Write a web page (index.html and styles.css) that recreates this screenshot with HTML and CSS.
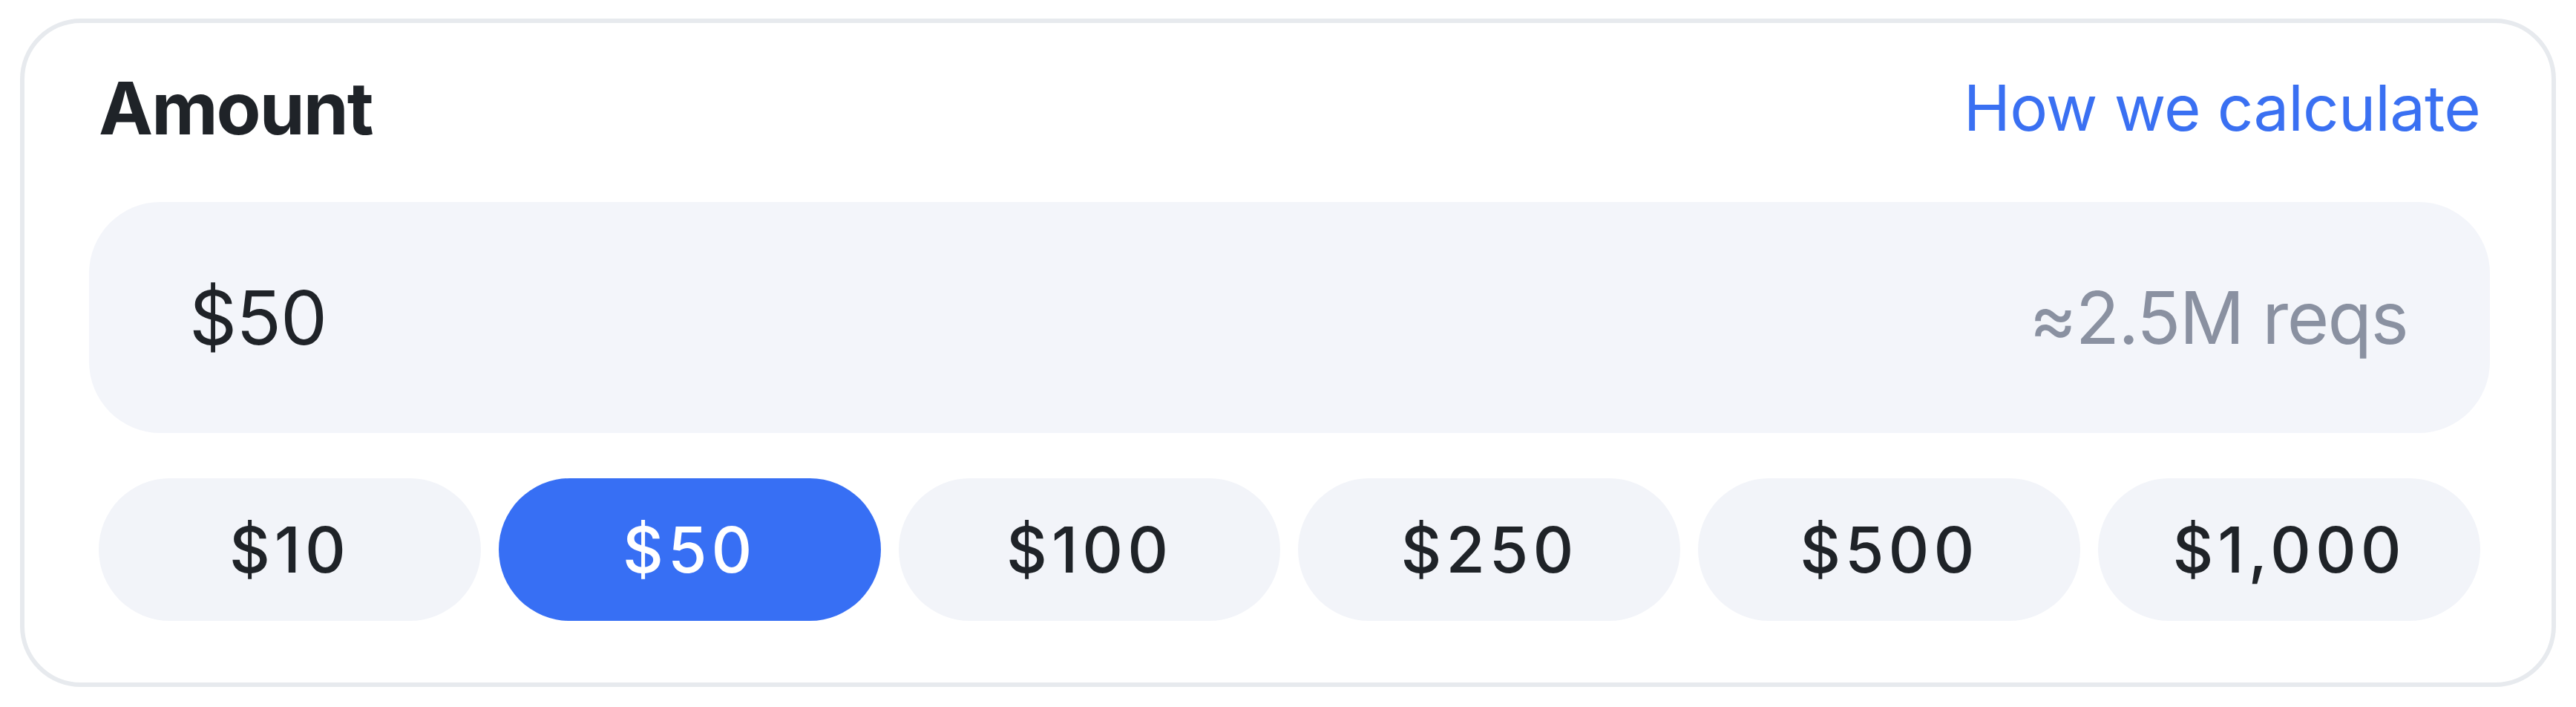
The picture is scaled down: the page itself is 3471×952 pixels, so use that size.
FILE: index.html
```html
<!DOCTYPE html>
<html lang="en">
<head>
<meta charset="utf-8">
<title>Amount</title>
<link rel="stylesheet" href="styles.css">
</head>
<body>
<section class="card">
  <header class="card-head">
    <h2 class="title">Amount</h2>
    <a class="link" href="#">How we calculate</a>
  </header>
  <div class="amount-field">
    <span class="amount-value">$50</span>
    <span class="amount-hint">≈2.5M reqs</span>
  </div>
  <div class="chips">
    <button class="chip">$10</button>
    <button class="chip chip-active">$50</button>
    <button class="chip">$100</button>
    <button class="chip">$250</button>
    <button class="chip">$500</button>
    <button class="chip">$1,000</button>
  </div>
</section>
</body>
</html>
```
FILE: styles.css
```css
html, body {
  margin: 0;
  padding: 0;
  background: #ffffff;
}
body {
  font-family: Inter, "Noto Sans", "Liberation Sans", sans-serif;
  color: #1f2328;
  padding: 25px 27px;
}
.card {
  box-sizing: border-box;
  border: 6px solid #e7eaee;
  border-radius: 82px;
  background: #ffffff;
  padding: 55px 96px 83px 100px;
}
.card-head {
  display: flex;
  align-items: center;
  justify-content: space-between;
  height: 120px;
}
.title {
  margin: 0;
  font-size: 98px;
  font-weight: 700;
  line-height: 120px;
  letter-spacing: -2px;
  color: #1f2328;
}
.link {
  font-size: 85px;
  font-weight: 400;
  line-height: 120px;
  letter-spacing: -0.8px;
  color: #3a70f2;
  text-decoration: none;
}
.amount-field {
  margin: 66px -13px 0 -13px;
  height: 311px;
  box-sizing: border-box;
  background: #f3f5fa;
  border-radius: 96px;
  display: flex;
  align-items: center;
  justify-content: space-between;
  padding: 0 111px 0 135px;
}
.amount-value {
  font-size: 100px;
  font-weight: 400;
  letter-spacing: -1px;
  color: #1f2328;
}
.amount-hint {
  font-size: 97px;
  font-weight: 400;
  letter-spacing: -1.6px;
  color: #8a91a1;
}
.chips {
  margin-top: 61px;
  display: grid;
  grid-template-columns: repeat(6, 1fr);
  gap: 24px;
}
.chip {
  height: 192px;
  border: none;
  border-radius: 96px;
  background: #f2f4f9;
  font-family: Inter, "Noto Sans", "Liberation Sans", sans-serif;
  font-size: 85px;
  font-weight: 500;
  letter-spacing: 6px;
  color: #1f2328;
  padding: 0;
}
.chip-active {
  background: #376ff4;
  color: #ffffff;
}
```
